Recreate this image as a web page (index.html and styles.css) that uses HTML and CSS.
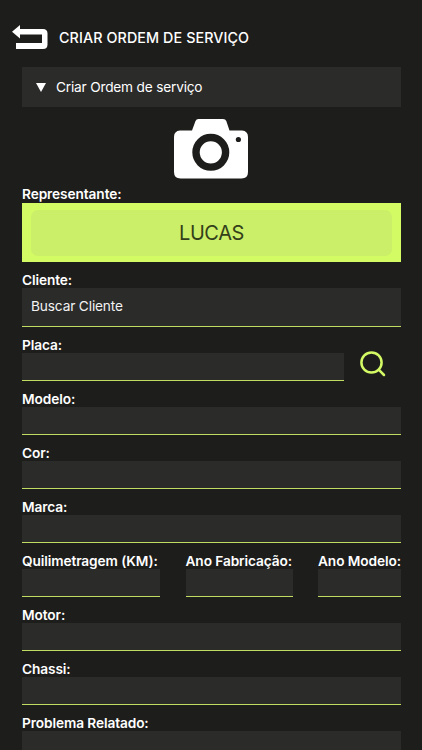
FILE: index.html
```html
<!DOCTYPE html>
<html lang="pt-BR">
<head>
    <meta charset="UTF-8">
    <meta name="viewport" content="width=device-width, initial-scale=1.0">
    <title>Criar Ordem de Serviço</title>
    <link rel="stylesheet" href="styles.css">
</head>
<body>
    <header class="topo">
        <a href="#" class="voltar" aria-label="Voltar">
            <svg width="36" height="24" viewBox="0 0 36 24">
                <path d="M0 6.8L8 0V4H31Q35.5 4 35.5 8.5V19.5Q35.5 24 31 24H4V18H30V9.5H8V13.5Z" fill="#fff"/>
            </svg>
        </a>
        <h1>CRIAR ORDEM DE SERVIÇO</h1>
    </header>

    <main class="container">
        <div class="menu">
            <svg class="seta" width="10" height="9" viewBox="0 0 10 9"><path d="M0 0H10L5 9Z" fill="#fff"/></svg>
            <span>Criar Ordem de serviço</span>
        </div>

        <div class="foto">
            <svg width="74" height="60" viewBox="0 0 74 60">
                <path d="M6 11.5H18L21.5 2Q22.3 0 24.5 0H49Q51.5 0 52.3 2L55.5 11.5H68Q74 12 74 18V53Q74 59.5 67.5 59.5H6.5Q0 59.5 0 53V18Q0 12 6 11.5Z" fill="#fff"/>
                <circle cx="36.8" cy="33.3" r="14.8" fill="none" stroke="#1d1d1b" stroke-width="7.4"/>
                <circle cx="64.4" cy="20.5" r="2.6" fill="#1d1d1b"/>
            </svg>
        </div>

        <form id="form-ordem">
            <div class="campo">
                <label for="representante" class="l-representante">Representante:</label>
                <div class="representante">
                    <button type="button" id="representante">LUCAS</button>
                </div>
            </div>

            <div class="campo">
                <label for="cliente">Cliente:</label>
                <input type="text" id="cliente" class="cliente" placeholder="Buscar Cliente">
            </div>

            <div class="linha-placa">
                <div class="campo">
                    <label for="placa">Placa:</label>
                    <input type="text" id="placa">
                </div>
                <button type="button" class="buscar" aria-label="Buscar placa">
                    <svg width="26" height="26" viewBox="0 0 26 26" fill="none" stroke="#d3fa64" stroke-width="2.5" stroke-linecap="round">
                        <circle cx="11.5" cy="11.5" r="10.1"/>
                        <path d="M18.7 18.7L24 24"/>
                    </svg>
                </button>
            </div>

            <div class="campo">
                <label for="modelo">Modelo:</label>
                <input type="text" id="modelo">
            </div>

            <div class="campo">
                <label for="cor">Cor:</label>
                <input type="text" id="cor">
            </div>

            <div class="campo">
                <label for="marca">Marca:</label>
                <input type="text" id="marca">
            </div>

            <div class="linha-anos">
                <div class="campo">
                    <label for="km">Quilimetragem (KM):</label>
                    <input type="text" id="km">
                </div>
                <div class="campo">
                    <label for="ano_fabricacao">Ano Fabricação:</label>
                    <input type="text" id="ano_fabricacao">
                </div>
                <div class="campo">
                    <label for="ano_modelo">Ano Modelo:</label>
                    <input type="text" id="ano_modelo">
                </div>
            </div>

            <div class="campo">
                <label for="motor">Motor:</label>
                <input type="text" id="motor">
            </div>

            <div class="campo">
                <label for="chassi">Chassi:</label>
                <input type="text" id="chassi">
            </div>

            <div class="campo problema">
                <label for="problema">Problema Relatado:</label>
                <textarea id="problema"></textarea>
            </div>
        </form>
    </main>
</body>
</html>
```
FILE: styles.css
```css
* {
    box-sizing: border-box;
}

body {
    font-family: Inter, "Liberation Sans", sans-serif;
    background-color: #1d1d1b;
    color: #fff;
    margin: 0;
    height: 750px;
    overflow: hidden;
}

.topo {
    display: flex;
    height: 67px;
    padding: 25px 0 0 12px;
}

.voltar {
    width: 47px;
    height: 24px;
}

h1 {
    margin: 0;
    font-size: 14.3px;
    font-weight: 550;
    letter-spacing: 0.1px;
    line-height: 26px;
    white-space: nowrap;
}

.container {
    padding: 0 21px 0 22px;
}

.menu {
    display: flex;
    align-items: center;
    height: 40px;
    padding-left: 14px;
    background-color: #2b2b2a;
    font-size: 13.7px;
    letter-spacing: -0.2px;
}

.menu span {
    margin-bottom: 1px;
}

.seta {
    margin-right: 10px;
}

.foto {
    height: 79px;
    padding: 12px 2px 0 0;
    text-align: center;
}

.campo {
    margin-bottom: 10px;
}

label {
    display: block;
    height: 16px;
    font-size: 13.7px;
    font-weight: 600;
    letter-spacing: -0.1px;
    line-height: 16px;
    white-space: nowrap;
}

input,
textarea {
    display: block;
    width: 100%;
    height: 28px;
    padding: 0 9px;
    border: none;
    border-bottom: 1px solid #c0dc62;
    border-radius: 0;
    background-color: #2b2b2a;
    color: #fff;
    font-family: inherit;
    font-size: 13.7px;
    letter-spacing: -0.15px;
    outline: none;
}

textarea {
    height: 19px;
    border-bottom: none;
    resize: none;
}

.problema {
    margin-bottom: 0;
}

input::placeholder {
    color: #f2f2f2;
}

.cliente {
    height: 39px;
    padding-bottom: 2px;
}

.l-representante {
    height: 17px;
}

.representante {
    height: 59px;
    padding: 7px 9px 6px;
    background-color: #d3fb64;
}

.representante button {
    width: 100%;
    height: 46px;
    padding: 0 0 1px;
    border: none;
    border-radius: 7px;
    background-color: #cbef68;
    color: #33401a;
    font-family: inherit;
    font-size: 20px;
    letter-spacing: -0.4px;
}

.linha-placa {
    display: flex;
}

.linha-placa .campo {
    width: 322px;
}

.buscar {
    margin-left: 16px;
    padding: 14px 0 0;
    height: 40px;
    border: none;
    background: none;
}

.linha-anos {
    display: grid;
    grid-template-columns: 138px 107px 83px;
    justify-content: space-between;
}
```
